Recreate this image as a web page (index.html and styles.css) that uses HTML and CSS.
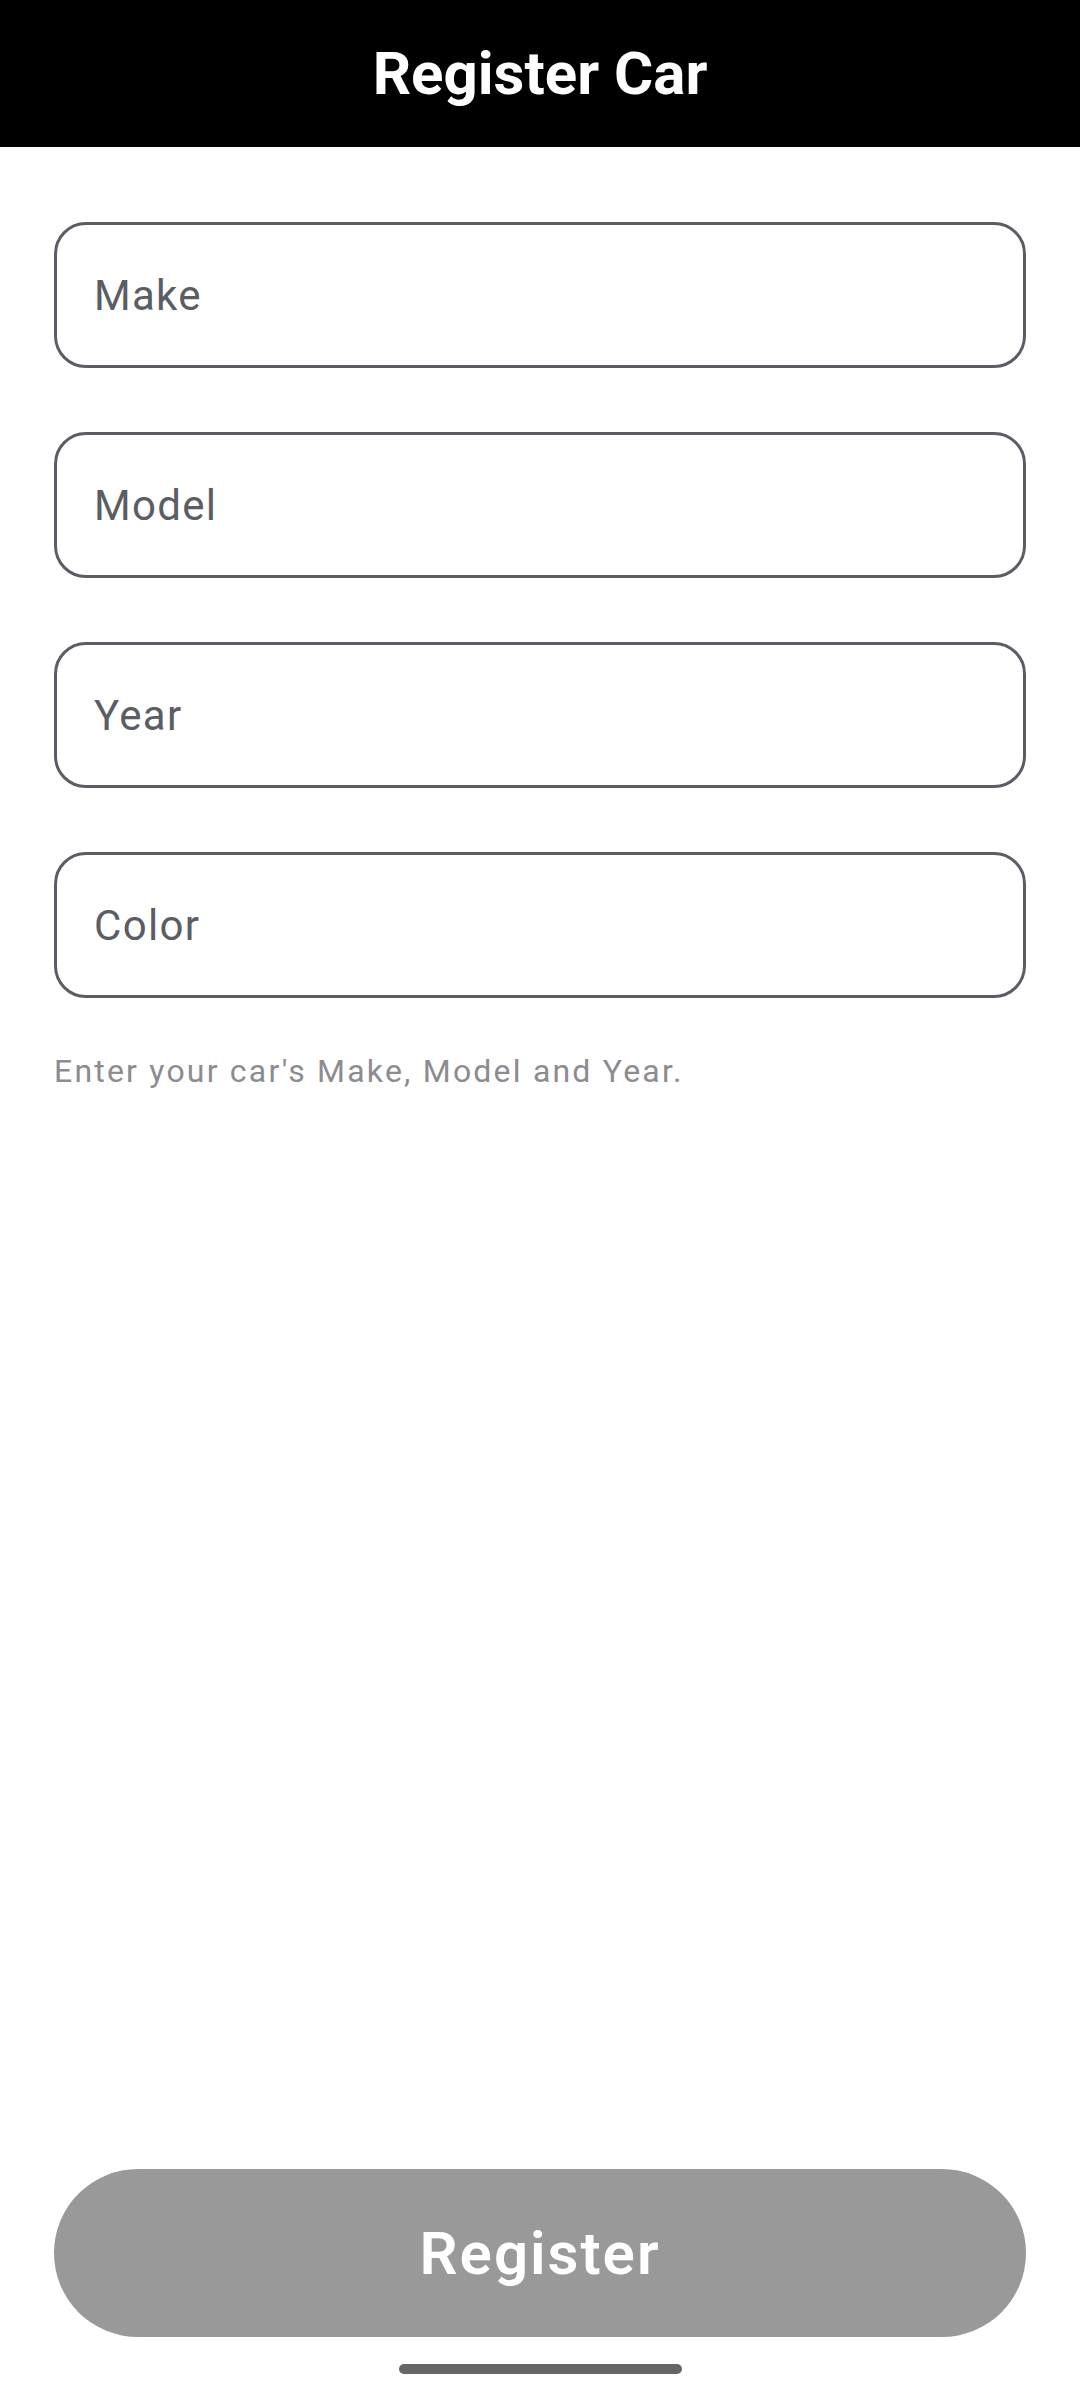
FILE: index.html
```html
<!DOCTYPE html>
<html lang="en">
<head>
  <meta charset="UTF-8">
  <title>Register Car</title>
  <link rel="stylesheet" href="styles.css">
</head>
<body>

<!-- Top bar -->
<header class="topbar">
  <h1>Register Car</h1>
</header>

<!-- Form -->
<main class="form">
  <input class="field" type="text" placeholder="Make">
  <input class="field" type="text" placeholder="Model">
  <input class="field" type="text" placeholder="Year">
  <input class="field" type="text" placeholder="Color">
  <p class="hint">Enter your car's Make, Model and Year.</p>
</main>

<div class="actions">
  <button class="register" disabled>Register</button>
</div>

<!-- Gesture bar -->
<div class="navbar">
  <div class="handle"></div>
</div>

</body>
</html>
```

FILE: styles.css
```css
body {
  margin: 0;
  width: 1080px;
  height: 2400px;
  display: flex;
  flex-direction: column;
  background: #fff;
  font-family: Roboto, "Noto Sans", sans-serif;
}
.topbar {
  height: 147px;
  background: #000;
  display: flex;
  align-items: center;
  justify-content: center;
}
.topbar h1 {
  margin: 0;
  color: #fff;
  font-size: 60px;
  font-weight: 700;
}
.form {
  flex: 1;
  display: flex;
  flex-direction: column;
  gap: 64px;
  padding: 75px 54px 0;
}
.field {
  box-sizing: border-box;
  height: 146px;
  width: 100%;
  margin: 0;
  padding: 0 37px;
  border: 3px solid #5b5d65;
  border-radius: 32px;
  font-family: inherit;
  font-size: 42px;
  letter-spacing: 1.3px;
  color: #1c1b1f;
  background: #fff;
  outline: none;
}
.field::placeholder {
  color: #5b5d65;
}
.hint {
  margin: -13px 0 0;
  font-size: 32px;
  line-height: 44px;
  letter-spacing: 2.2px;
  color: #8c8c90;
}
.actions {
  padding: 0 54px;
}
.register {
  width: 100%;
  height: 168px;
  border: none;
  border-radius: 84px;
  background: #999;
  color: #fff;
  font-family: inherit;
  font-size: 60px;
  font-weight: 600;
  letter-spacing: 2px;
}
.navbar {
  height: 63px;
  display: flex;
  align-items: center;
  justify-content: center;
}
.handle {
  width: 283px;
  height: 10px;
  border-radius: 5px;
  background: #666;
}
```
